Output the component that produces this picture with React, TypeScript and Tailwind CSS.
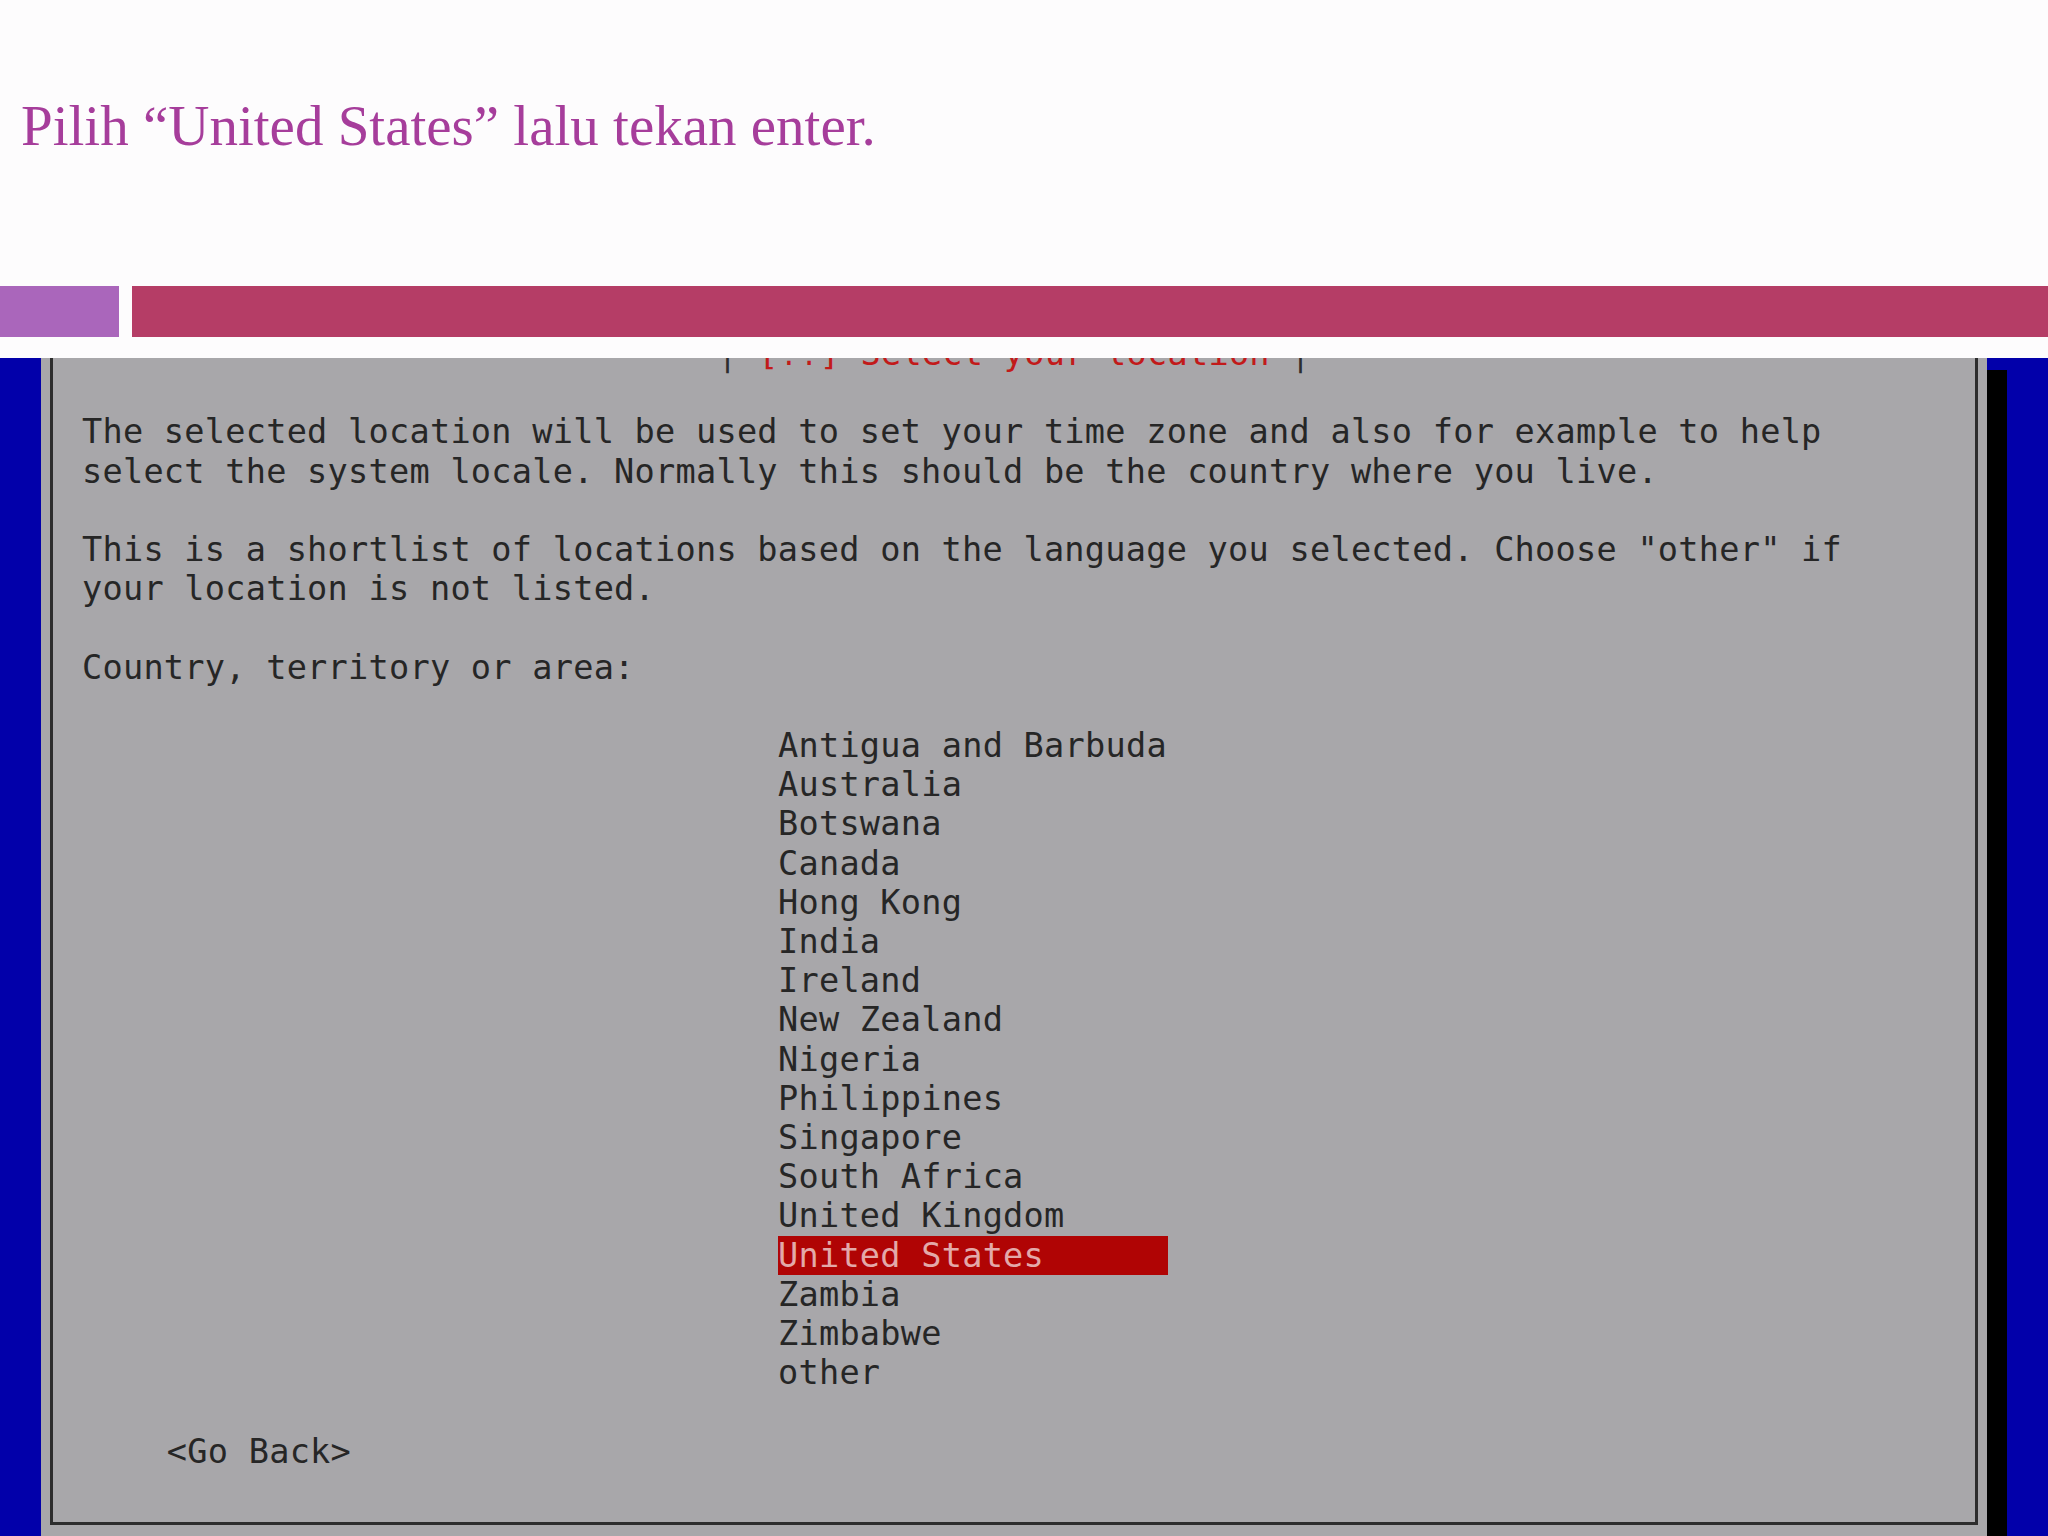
import React from "react";

const intro = [
  "The selected location will be used to set your time zone and also for example to help",
  "select the system locale. Normally this should be the country where you live.",
  "",
  'This is a shortlist of locations based on the language you selected. Choose "other" if',
  "your location is not listed.",
  "",
  "Country, territory or area:",
  "",
];

const countries = [
  "Antigua and Barbuda",
  "Australia",
  "Botswana",
  "Canada",
  "Hong Kong",
  "India",
  "Ireland",
  "New Zealand",
  "Nigeria",
  "Philippines",
  "Singapore",
  "South Africa",
  "United Kingdom",
  "United States",
  "Zambia",
  "Zimbabwe",
  "other",
];

const selected = "United States";

const mono = { fontFamily: '"DejaVu Sans Mono", "Liberation Mono", monospace' };

export default function App() {
  return (
    <div className="w-[2048px] h-[1536px] overflow-hidden bg-[#fdfcfd] flex flex-col">
      {/* Slide title */}
      <div className="h-[286px] pt-[97px] pl-[21px]">
        <h1
          className="text-[57px] leading-none text-[#a63d9b]"
          style={{ fontFamily: '"Liberation Serif", "Times New Roman", serif' }}
        >
          Pilih “United States” lalu tekan enter.
        </h1>
      </div>

      {/* Accent bars */}
      <div className="h-[51px] flex gap-[13px]">
        <div className="w-[119px] bg-[#aa66bb]" />
        <div className="flex-1 bg-[#b53d66]" />
      </div>

      <div className="h-[21px]" />

      {/* Installer screenshot, top row cropped like the original */}
      <div className="flex-1 flex bg-[#0200aa] overflow-hidden" style={mono}>
        <div className="w-[41px] shrink-0" />

        <div className="w-[1946px] shrink-0 -mt-[24px] bg-[#a8a7aa] px-[9px] text-[33.6px] leading-[39.2px] tracking-[0.25px] text-[#262626]">
          <div className="border-x-[3px] border-b-[3px] border-[#2d2d2d] pl-[29px] pb-[12px] whitespace-pre">
            <div className="flex justify-center -ml-[29px]">
              <span className="text-[#2d2d2d]">┤ </span>
              <span className="text-[#c21a1a]">[!!] Select your location</span>
              <span className="text-[#2d2d2d]"> ├</span>
            </div>
            <div>&nbsp;</div>

            {intro.map((line, i) => (
              <div key={i}>{line || "\u00a0"}</div>
            ))}

            <div className="pl-[696px]">
              {countries.map((c) => (
                <div key={c}>
                  {c === selected ? (
                    <span className="inline-block w-[390px] bg-[#b00404] text-[#e3a9a9]">{c}</span>
                  ) : (
                    c
                  )}
                </div>
              ))}
            </div>

            <div>&nbsp;</div>
            <div className="pl-[3px]">{"    <Go Back>"}</div>
            <div>&nbsp;</div>
          </div>
        </div>

        <div className="w-[20px] shrink-0 mt-[12px] bg-black" />
        <div className="flex-1" />
      </div>
    </div>
  );
}
